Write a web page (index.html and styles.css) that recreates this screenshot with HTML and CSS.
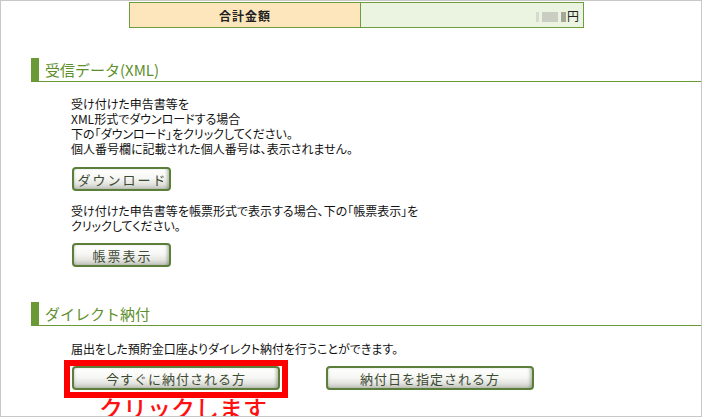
FILE: index.html
```html
<!DOCTYPE html>
<html lang="ja">
<head>
<meta charset="utf-8">
<title>受信データ</title>
<link rel="stylesheet" href="styles.css">
</head>
<body>
<div class="frame">
  <table class="total">
    <tr>
      <th class="total-label">合計金額</th>
      <td class="total-value"><span class="blur"><i class="b1"></i><i class="b2"></i><i class="b3"></i></span>円</td>
    </tr>
  </table>

  <h2 class="sec-head sec-xml">受信データ(XML)</h2>
  <p class="desc desc-1">受け付けた申告書等を<br>XML形式でダウンロードする場合<br>下の「ダウンロード」をクリックしてください。<br>個人番号欄に記載された個人番号は、表示されません。</p>
  <div class="btn-row btn-row-1"><button class="btn btn-small">ダウンロード</button></div>
  <p class="desc desc-2">受け付けた申告書等を帳票形式で表示する場合、下の「帳票表示」を<br>クリックしてください。</p>
  <div class="btn-row btn-row-2"><button class="btn btn-small">帳票表示</button></div>

  <h2 class="sec-head sec-direct">ダイレクト納付</h2>
  <p class="desc desc-3">届出をした預貯金口座よりダイレクト納付を行うことができます。</p>
  <div class="pay-row">
    <div class="red-box"><button class="btn btn-wide">今すぐに納付される方</button></div>
    <button class="btn btn-wide btn-second">納付日を指定される方</button>
  </div>
  <div class="note">クリックします</div>
</div>
</body>
</html>
```

FILE: styles.css
```css
html, body {
  margin: 0;
  padding: 0;
  background: #fff;
}
body {
  font-family: "Noto Sans CJK JP", "Noto Sans", sans-serif;
  font-size: 12px;
  color: #111;
}
.frame {
  width: 702px;
  height: 417px;
  box-sizing: border-box;
  border: 1px solid #c8c8c8;
  overflow: hidden;
}
.total {
  border-collapse: collapse;
  margin: 1px 0 0 128px;
}
.total th, .total td {
  height: 24px;
  padding: 0;
  border: 1px solid #6e9c3e;
  font-size: 12px;
}
.total-label {
  width: 230px;
  background: #fde6bb;
  font-weight: bold;
  color: #222;
  text-align: center;
  letter-spacing: 1px;
}
.total-value {
  width: 218px;
  background: #eaf4e0;
  text-align: right;
  padding-right: 4px !important;
  color: #222;
}
.blur {
  display: inline-flex;
  align-items: center;
  gap: 3px;
  vertical-align: -1px;
  margin-right: 1px;
}
.blur i {
  display: inline-block;
  height: 10px;
  background: #c9cdc2;
}
.blur .b1 { width: 3px; background: #d6dad0; }
.blur .b2 { width: 16px; }
.blur .b3 { width: 5px; background: #a2a797; }

.sec-head {
  margin: 0 0 0 30px;
  height: 23px;
  border-left: 8px solid #6a9a36;
  border-bottom: 1px solid #6a9a36;
  padding-left: 6px;
  font-size: 15px;
  font-weight: normal;
  color: #5e8f2c;
  line-height: 24px;
}
.sec-xml { margin-top: 30px; }
.sec-direct { margin-top: 35px; }

.desc {
  margin: 0 0 0 70px;
  line-height: 15px;
  font-size: 12px;
  font-feature-settings: "palt";
  color: #111;
}
.desc-1 { margin-top: 14px; }
.desc-2 { margin-top: 12px; }
.desc-3 { margin-top: 15px; }

.btn-row { margin-left: 71px; }
.btn-row-1 { margin-top: 11px; }
.btn-row-2 { margin-top: 10px; }

.btn {
  display: block;
  box-sizing: border-box;
  height: 24px;
  padding: 0;
  border: 2px solid #5b7f3a;
  border-radius: 4px;
  background: linear-gradient(to bottom, #ffffff 0%, #f7f7f5 45%, #e4e4e0 75%, #c2c4bd 100%);
  box-shadow: inset -3px 0 3px -1px rgba(70, 90, 50, 0.35), inset 2px 0 2px -1px rgba(120, 140, 100, 0.25);
  font-family: "Noto Sans CJK JP", "Noto Sans", sans-serif;
  font-size: 13px;
  color: #3c4b34;
  line-height: 19px;
  cursor: pointer;
}
.btn-small {
  width: 99px;
  letter-spacing: 2px;
  text-indent: 2px;
}
.btn-wide {
  width: 208px;
  letter-spacing: 1px;
}

.pay-row {
  display: flex;
  align-items: flex-start;
  margin: 4px 0 0 63px;
}
.red-box {
  border: 6px solid #ff0000;
  padding: 0 2px 2px 2px;
}
.btn-second {
  margin: 6px 0 0 38px;
}
.note {
  margin: -2px 0 0 98px;
  font-size: 24px;
  line-height: 24px;
  font-weight: 500;
  color: #ff1010;
}
```
